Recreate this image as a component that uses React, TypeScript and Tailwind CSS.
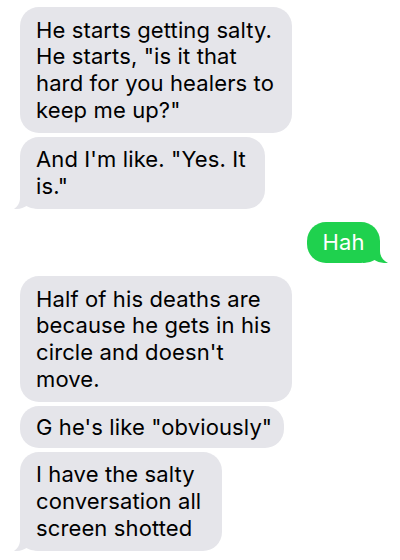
import React from "react";

const GREY = "#e5e5ea";
const GREEN = "#1fd14e";

function TailLeft() {
  return (
    <svg
      className="absolute left-[-7px] bottom-0"
      width="26"
      height="22"
      viewBox="0 0 26 22"
    >
      <path
        d="M7 0 V11 C7 16 4.5 19.5 1 22 C6 22.3 10.5 21 13.5 19 C16 20.5 19 21.5 26 22 V0 Z"
        fill={GREY}
      />
    </svg>
  );
}

function TailRight() {
  return (
    <svg
      className="absolute right-[-9px] bottom-0"
      width="26"
      height="22"
      viewBox="0 0 26 22"
    >
      <path
        d="M17 0 V10 C17 15.5 20 19.5 25 22 C19 22.4 14.5 21 11.5 19 C9 20.5 6 21.5 0 22 V0 Z"
        fill={GREEN}
      />
    </svg>
  );
}

type BubbleProps = {
  lines: string[];
  width: string;
  tail?: boolean;
  single?: boolean;
};

function Grey({ lines, width, tail, single }: BubbleProps) {
  return (
    <div
      className={`relative self-start ${width} rounded-[19px] bg-[#e5e5ea] pl-4 pr-2 ${
        single ? "py-[7.5px]" : "py-[9.5px]"
      }`}
    >
      {tail && <TailLeft />}
      <div className="relative text-[22px] tracking-[0.12px] leading-[26.7px] text-black whitespace-nowrap">
        {lines.map((l, i) => (
          <div key={i}>{l}</div>
        ))}
      </div>
    </div>
  );
}

export default function App() {
  return (
    <div
      className="w-[400px] h-[560px] bg-white overflow-hidden flex flex-col px-5 pt-[7px]"
      style={{ fontFamily: "Inter, 'Noto Sans', sans-serif" }}
    >
      <Grey
        width="w-[272px]"
        lines={[
          "He starts getting salty.",
          'He starts, "is it that',
          "hard for you healers to",
          'keep me up?"',
        ]}
      />
      <div className="h-1" />
      <Grey width="w-[245px]" tail lines={['And I\'m like. "Yes. It', 'is."']} />
      <div className="h-[13px]" />
      <div className="relative self-end w-[73px] h-[41px] rounded-[19px] bg-[#1fd14e] flex items-center justify-center">
        <TailRight />
        <span className="relative text-[22px] tracking-[0.12px] leading-[26.7px] text-white">Hah</span>
      </div>
      <div className="h-[13px]" />
      <Grey
        width="w-[272px]"
        lines={[
          "Half of his deaths are",
          "because he gets in his",
          "circle and doesn't",
          "move.",
        ]}
      />
      <div className="h-1" />
      <Grey width="w-[264px]" single lines={['G he\'s like "obviously"']} />
      <div className="h-1" />
      <Grey
        width="w-[202px]"
        tail
        lines={["I have the salty", "conversation all", "screen shotted"]}
      />
    </div>
  );
}
